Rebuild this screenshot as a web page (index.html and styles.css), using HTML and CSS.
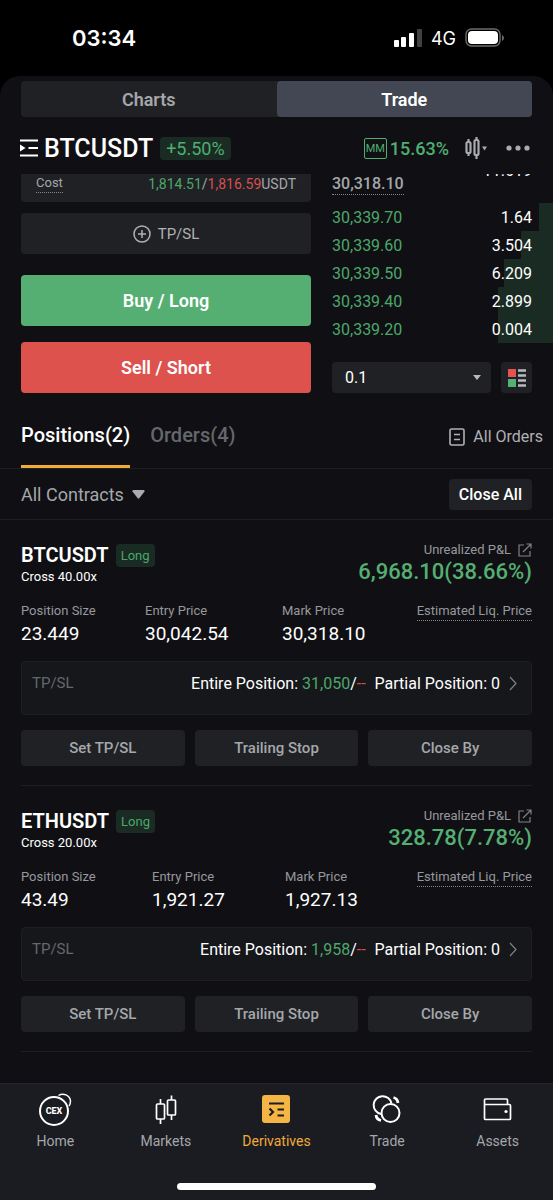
FILE: index.html
```html
<!DOCTYPE html>
<html lang="en">
<head>
    <meta charset="UTF-8">
    <meta name="viewport" content="width=device-width, initial-scale=1.0">
    <title>BTCUSDT - Derivatives</title>
    <link rel="stylesheet" href="styles.css">
</head>
<body>
    <div class="status-bar">
        <span class="time">03:34</span>
        <div class="status-icons">
            <svg width="28" height="18" viewBox="0 0 28 18">
                <rect x="0" y="11" width="5" height="7" rx="1" fill="#fff"/>
                <rect x="7" y="8" width="5" height="10" rx="1" fill="#fff"/>
                <rect x="15" y="4" width="5" height="14" rx="1" fill="#fff"/>
                <rect x="23" y="0" width="5" height="18" rx="1" fill="#414141"/>
            </svg>
            <span class="network">4G</span>
            <svg width="40" height="20" viewBox="0 0 40 20">
                <rect x="1" y="1" width="34" height="17" rx="5.5" fill="none" stroke="#6d6d66" stroke-width="1.4"/>
                <rect x="3" y="3" width="30" height="13" rx="4" fill="#fff"/>
                <path d="M37 7v6q2-1 2-3t-2-3z" fill="#6d6d66"/>
            </svg>
        </div>
    </div>

    <div class="app">
        <div class="switch">
            <button>Charts</button>
            <button class="active">Trade</button>
        </div>

        <header class="symbol-bar">
            <svg width="18" height="18" viewBox="0 0 18 18">
                <path d="M0 1.5h18M8.5 9H18M0 16.5h18" stroke="#fff" stroke-width="2.2"/>
                <path d="M0 5.5L5.5 9 0 12.5z" fill="#fff"/>
            </svg>
            <h1>BTCUSDT</h1>
            <span class="change">+5.50%</span>
            <span class="mm">MM</span>
            <span class="mm-rate">15.63%</span>
            <svg class="candles" width="22" height="22" viewBox="0 0 22 22" fill="none" stroke="#a9abb0" stroke-width="2.2">
                <path d="M3.5 2v3M3.500 16v3M11.5 0v3M11.5 18v4"/>
                <rect x="1.500" y="5" width="4" height="11" rx="1.5"/>
                <rect x="9.500" y="3" width="4" height="15" rx="1.5"/>
                <path d="M17 9.500h5l-2.500 4z" fill="#a9abb0" stroke="none"/>
            </svg>
            <svg width="24" height="6" viewBox="0 0 24 6" fill="#a9abb0">
                <circle cx="3" cy="3" r="2.6"/>
                <circle cx="12" cy="3" r="2.6"/>
                <circle cx="21" cy="3" r="2.6"/>
            </svg>
        </header>

        <section class="order-area">
            <div class="order-form">
                <div class="cost">
                    <span class="dotted">Cost</span>
                    <span class="cost-value"><span class="green">1,814.51</span>/<span class="red">1,816.59</span>USDT</span>
                </div>
                <button class="tpsl-btn">
                    <svg width="18" height="18" viewBox="0 0 18 18" fill="none" stroke="#b0b1b4" stroke-width="1.5">
                        <circle cx="9" cy="9" r="8"/>
                        <path d="M9 5v8M5 9h8"/>
                    </svg>
                    TP/SL
                </button>
                <button class="side-btn buy">Buy / Long</button>
                <button class="side-btn sell">Sell / Short</button>
            </div>

            <div class="order-book">
                <div class="book-head">
                    <span class="dotted mark">30,318.10</span>
                    <span class="last-ask">11.619</span>
                </div>
                <div class="book-row depth-1"><span>30,339.70</span><span>1.64</span></div>
                <div class="book-row depth-2"><span>30,339.60</span><span>3.504</span></div>
                <div class="book-row depth-3"><span>30,339.50</span><span>6.209</span></div>
                <div class="book-row depth-4"><span>30,339.40</span><span>2.899</span></div>
                <div class="book-row depth-4"><span>30,339.20</span><span>0.004</span></div>
                <div class="book-tools">
                    <div class="step">
                        <select aria-label="Price step">
                            <option>0.1</option>
                            <option>1</option>
                            <option>10</option>
                        </select>
                        <svg width="8" height="5" viewBox="0 0 8 5"><path d="M0 0h8L4 5z" fill="#b9babd"/></svg>
                    </div>
                    <button class="view-btn" aria-label="Order book view">
                        <svg width="18" height="18" viewBox="0 0 18 18">
                            <path d="M0 0h8v8H0z" fill="#e5534f"/>
                            <path d="M0 10h8v8H0z" fill="#54b073"/>
                            <path d="M10 1.5h8M10 6.5h8M10 11.5h8M10 16.5h8" stroke="#b9babd" stroke-width="2.5"/>
                        </svg>
                    </button>
                </div>
            </div>
        </section>

        <nav class="tabs">
            <button class="active">Positions(2)</button>
            <button>Orders(4)</button>
            <a href="#" class="all-orders">
                <svg width="16" height="18" viewBox="0 0 16 18" fill="none" stroke="#b0b1b4" stroke-width="1.6">
                    <rect x="1" y="1" width="14" height="16" rx="1.5"/>
                    <path d="M5 6.5h6M5 11.5h6"/>
                </svg>
                All Orders
            </a>
        </nav>

        <div class="filter">
            <button class="contracts">
                All Contracts
                <svg width="13" height="9" viewBox="0 0 13 9"><path d="M1.5 0h10q1.5 0 1 1.500L7.500 8q-1 1-2 0L.5 1.500Q0 0 1.500 0z" fill="#a9abb0"/></svg>
            </button>
            <button class="close-all">Close All</button>
        </div>

        <main>
            <article class="position">
                <div class="pos-head">
                    <div>
                        <h2>BTCUSDT <span class="long">Long</span></h2>
                        <p class="leverage">Cross 40.00x</p>
                    </div>
                    <div class="pnl">
                        <a href="#">Unrealized P&amp;L
                            <svg width="14" height="14" viewBox="0 0 14 14" fill="none" stroke="#808186" stroke-width="1.2">
                                <path d="M6 2H1v11h11V8M5 9l8-8M8.500 1H13v4.500"/>
                            </svg>
                        </a>
                        <strong>6,968.10(38.66%)</strong>
                    </div>
                </div>
                <dl class="stats">
                    <div><dt>Position Size</dt><dd>23.449</dd></div>
                    <div><dt>Entry Price</dt><dd>30,042.54</dd></div>
                    <div><dt>Mark Price</dt><dd>30,318.10</dd></div>
                    <div><dt class="dotted">Estimated Liq. Price</dt></div>
                </dl>
                <a href="#" class="tpsl-box">
                    <span class="label">TP/SL</span>
                    <span>Entire Position: <span class="green">31,050</span>/<span class="red">--</span></span>
                    <span>Partial Position: 0</span>
                    <svg width="8" height="15" viewBox="0 0 8 15" fill="none" stroke="#808186" stroke-width="1.2"><path d="M1 1l6 6.500L1 14"/></svg>
                </a>
                <div class="actions">
                    <button>Set TP/SL</button>
                    <button>Trailing Stop</button>
                    <button>Close By</button>
                </div>
            </article>

            <article class="position">
                <div class="pos-head">
                    <div>
                        <h2>ETHUSDT <span class="long">Long</span></h2>
                        <p class="leverage">Cross 20.00x</p>
                    </div>
                    <div class="pnl">
                        <a href="#">Unrealized P&amp;L
                            <svg width="14" height="14" viewBox="0 0 14 14" fill="none" stroke="#808186" stroke-width="1.2">
                                <path d="M6 2H1v11h11V8M5 9l8-8M8.500 1H13v4.500"/>
                            </svg>
                        </a>
                        <strong>328.78(7.78%)</strong>
                    </div>
                </div>
                <dl class="stats narrow">
                    <div><dt>Position Size</dt><dd>43.49</dd></div>
                    <div><dt>Entry Price</dt><dd>1,921.27</dd></div>
                    <div><dt>Mark Price</dt><dd>1,927.13</dd></div>
                    <div><dt class="dotted">Estimated Liq. Price</dt></div>
                </dl>
                <a href="#" class="tpsl-box">
                    <span class="label">TP/SL</span>
                    <span>Entire Position: <span class="green">1,958</span>/<span class="red">--</span></span>
                    <span>Partial Position: 0</span>
                    <svg width="8" height="15" viewBox="0 0 8 15" fill="none" stroke="#808186" stroke-width="1.2"><path d="M1 1l6 6.500L1 14"/></svg>
                </a>
                <div class="actions">
                    <button>Set TP/SL</button>
                    <button>Trailing Stop</button>
                    <button>Close By</button>
                </div>
            </article>
        </main>
    </div>

    <footer class="bottom-nav">
        <nav>
            <a href="#">
                <svg width="34" height="34" viewBox="0 0 34 34" fill="none" stroke="#fff" stroke-width="2">
                    <circle cx="16" cy="19" r="14"/>
                    <path d="M20.5 3.500C25 .5 32 3 32.500 9q0 3-1.500 5" stroke-width="1.5"/>
                    <text x="16" y="22" class="cex">CEX</text>
                </svg>
                Home
            </a>
            <a href="#">
                <svg width="34" height="34" viewBox="0 0 34 34" fill="none" stroke="#fff" stroke-width="1.7">
                    <rect x="7.500" y="12" width="8" height="15" rx="1"/>
                    <rect x="18.500" y="8" width="8" height="15" rx="1"/>
                    <path d="M11.500 7v5M11.500 27v5M22.500 3.500V8M22.500 23v5"/>
                </svg>
                Markets
            </a>
            <a href="#" class="active">
                <svg width="34" height="34" viewBox="0 0 34 34" fill="none" stroke="#1b1c21" stroke-width="2.2">
                    <rect x="3" y="3" width="28" height="28" rx="3" fill="#f5b544" stroke="none"/>
                    <path d="M10 11.500h15M18.500 17.500H25M18.500 23.500H25M10.500 16.500l3.500 3.500-3.500 3.500"/>
                </svg>
                Derivatives
            </a>
            <a href="#">
                <svg width="34" height="34" viewBox="0 0 34 34" fill="none" stroke="#fff" stroke-width="2">
                    <circle cx="20.500" cy="21" r="9"/>
                    <path d="M11 22A9 9 0 1 1 21.500 11.500"/>
                    <path d="M23.500 5.500q4 1 4.500 5.500M6 23q.5 4.500 5 5.500" stroke-width="2.8"/>
                </svg>
                Trade
            </a>
            <a href="#">
                <svg width="34" height="34" viewBox="0 0 34 34" fill="none" stroke="#fff" stroke-width="1.700">
                    <path d="M26.500 12.500V8q0-1-1-1h-21q-1 0-1 1v18.500q0 1 1 1h24q1 0 1-1V13.500q0-1-1-1h-25"/>
                    <circle cx="25" cy="19.500" r="1.600" fill="#fff" stroke="none"/>
                </svg>
                Assets
            </a>
        </nav>
        <div class="home-indicator"></div>
    </footer>
</body>
</html>
```
FILE: styles.css
```css
* {
    box-sizing: border-box;
}

body {
    margin: 0;
    min-height: 100vh;
    display: flex;
    flex-direction: column;
    background: #000;
    color: #fff;
    font-family: Roboto, "Liberation Sans", sans-serif;
    font-size: 16px;
}

h1, h2, p, dl, dd {
    margin: 0;
}

svg {
    flex: none;
}

a {
    color: inherit;
    text-decoration: none;
}

button {
    border: none;
    padding: 0;
    background: none;
    color: inherit;
    font: inherit;
    cursor: pointer;
}

.green {
    color: #4ba86a;
}

.red {
    color: #d94f4d;
}

.dotted {
    border-bottom: 1px dotted #85868b;
}

/* status bar */
.status-bar {
    height: 76px;
    padding: 0 48px 0 72px;
    display: flex;
    justify-content: space-between;
    align-items: center;
}

.time {
    font: 600 22px Inter, sans-serif;
}

.status-icons {
    display: flex;
    align-items: center;
    gap: 9px;
}

.network {
    font: 400 18px Inter, sans-serif;
}

/* app */
.app {
    flex: 1;
    padding-top: 5px;
    background: #101014;
    border-radius: 20px 20px 0 0;
}

.switch {
    height: 36px;
    margin: 0 21px;
    display: flex;
    background: #202125;
    border-radius: 4px;
}

.switch button {
    flex: 1;
    color: #a5a7ab;
    border-radius: 4px;
    font-size: 18px;
    font-weight: 600;
}

.switch button.active {
    background: #424753;
    color: #fff;
}

.symbol-bar {
    height: 57px;
    padding: 5px 23px 0 20px;
    display: flex;
    align-items: center;
}

.symbol-bar h1 {
    margin: 0 7px 0 6px;
    font-size: 25px;
    font-weight: 500;
}

.change {
    padding: 0 6px;
    background: #192b23;
    color: #4fae70;
    border-radius: 4px;
    font-size: 18px;
    line-height: 23px;
}

.mm {
    margin: 0 3px 0 auto;
    width: 23px;
    border: 1px solid #4fae70;
    border-radius: 2px;
    color: #4fae70;
    font-size: 11px;
    line-height: 19px;
    text-align: center;
}

.mm-rate {
    color: #4fae70;
    font-size: 18px;
    font-weight: 500;
}

.candles {
    margin: 0 19px 0 16px;
}

/* order form and order book */
.order-area {
    height: 219px;
    display: grid;
    grid-template-columns: 290px 1fr;
    gap: 21px;
    padding-left: 21px;
    overflow: hidden;
}

.cost {
    height: 28px;
    padding: 0 15px;
    display: flex;
    justify-content: space-between;
    align-items: flex-start;
    background: #202125;
    border-radius: 0 0 4px 4px;
    color: #a5a7ab;
    font-size: 13px;
    line-height: 18px;
}

.cost-value {
    font-size: 14px;
    line-height: 20px;
}

.tpsl-btn {
    width: 100%;
    height: 41px;
    margin: 11px 0 21px;
    display: flex;
    align-items: center;
    justify-content: center;
    gap: 7px;
    background: #202125;
    border-radius: 4px;
    color: #b0b1b4;
    font-size: 15px;
}

.side-btn {
    display: block;
    width: 100%;
    height: 51px;
    border-radius: 4px;
    font-size: 18px;
    font-weight: 600;
}

.buy {
    margin-bottom: 16px;
    background: #55af72;
}

.sell {
    background: #de524e;
}

.book-head {
    height: 29px;
    padding-right: 21px;
    display: flex;
    justify-content: space-between;
    align-items: flex-start;
}

.mark {
    color: #a5a7ab;
    font-weight: 500;
    line-height: 20px;
}

/* the last ask row is scrolled under the header */
.last-ask {
    margin-top: -12px;
    line-height: 18px;
}

.book-row {
    height: 28px;
    padding-right: 21px;
    display: flex;
    justify-content: space-between;
    align-items: center;
    background: linear-gradient(#192b23, #192b23) right / 0 100% no-repeat;
}

.book-row span:first-child {
    color: #4ba86a;
}

.depth-1 { background-size: 14px 100%; }
.depth-2 { background-size: 32px 100%; }
.depth-3 { background-size: 49px 100%; }
.depth-4 { background-size: 55px 100%; }

.book-tools {
    margin-top: 19px;
    padding-right: 21px;
    display: flex;
    gap: 10px;
}

.step {
    flex: 1;
    padding-right: 10px;
    display: flex;
    align-items: center;
    background: #202125;
    border-radius: 4px;
}

.step select {
    flex: 1;
    padding: 0 0 0 13px;
    appearance: none;
    border: none;
    background: none;
    color: #fff;
    font: inherit;
}

.view-btn {
    width: 31px;
    height: 31px;
    display: grid;
    place-items: center;
    background: #202125;
    border-radius: 4px;
}

/* tabs */
.tabs {
    height: 76px;
    padding: 12px 10px 0 21px;
    display: flex;
    border-bottom: 1px solid #1e1f23;
}

.tabs button {
    margin-right: 20px;
    border-bottom: 3px solid transparent;
    color: #65676c;
    font-size: 20px;
    font-weight: 500;
}

.tabs button.active {
    border-color: #f0aa3c;
    color: #fff;
}

.all-orders {
    margin-left: auto;
    display: flex;
    align-items: center;
    gap: 8px;
    color: #b0b1b4;
}

.filter {
    height: 51px;
    padding: 0 21px;
    display: flex;
    justify-content: space-between;
    align-items: center;
    border-bottom: 1px solid #1e1f23;
}

.contracts {
    display: flex;
    align-items: center;
    gap: 8px;
    color: #a5a7ab;
    font-size: 18px;
}

.close-all {
    padding: 0 10px;
    background: #202125;
    border-radius: 4px;
    font-weight: 500;
    line-height: 31px;
}

/* positions */
.position {
    margin: 0 21px;
    padding: 20px 0 19px;
    border-bottom: 1px solid #1e1f23;
}

.pos-head {
    display: flex;
    justify-content: space-between;
}

.pos-head h2 {
    display: flex;
    align-items: center;
    gap: 7px;
    font-size: 20px;
    font-weight: 600;
    line-height: 30px;
}

.long {
    padding: 0 5px;
    background: #192b23;
    border-radius: 4px;
    color: #4ba86a;
    font-size: 13px;
    font-weight: 400;
    line-height: 23px;
}

.leverage {
    font-size: 13px;
    line-height: 14px;
}

.pnl {
    display: flex;
    flex-direction: column;
    align-items: flex-end;
}

.pnl a {
    display: flex;
    align-items: center;
    gap: 7px;
    color: #97989c;
    font-size: 13px;
    line-height: 20px;
}

.pnl strong {
    color: #55af72;
    font-size: 22px;
    font-weight: 500;
    line-height: 24px;
}

.stats {
    margin: 18px 0 17px;
    height: 42px;
    display: grid;
    grid-template-columns: 124px 137px 1fr auto;
}

.stats.narrow {
    grid-template-columns: 131px 133px 1fr auto;
}

.stats dt {
    color: #97989c;
    font-size: 13px;
    line-height: 18px;
}

.stats dd {
    font-size: 19px;
    line-height: 28px;
}

.tpsl-box {
    height: 54px;
    padding: 0 14px 10px 10px;
    display: flex;
    align-items: center;
    gap: 9px;
    background: #16171b;
    border: 1px solid #1e1f23;
    border-radius: 4px;
}

.tpsl-box .label {
    margin-right: auto;
    color: #65676c;
    font-size: 15px;
}

.actions {
    margin-top: 15px;
    display: grid;
    grid-template-columns: repeat(3, 1fr);
    gap: 10px;
}

.actions button {
    height: 36px;
    background: #202125;
    border-radius: 4px;
    color: #a5a7ab;
    font-size: 15px;
    font-weight: 500;
}

/* bottom navigation */
.bottom-nav {
    height: 117px;
    background: #1b1c21;
    border-top: 1px solid #242529;
}

.bottom-nav nav {
    height: 99px;
    padding-top: 8px;
    display: grid;
    grid-template-columns: repeat(5, 1fr);
}

.bottom-nav a {
    display: flex;
    flex-direction: column;
    align-items: center;
    gap: 5px;
    color: #a5a7ab;
    font-size: 14px;
    line-height: 20px;
}

.bottom-nav a.active {
    color: #f0aa3c;
}

.cex {
    fill: #fff;
    stroke: none;
    font-size: 9px;
    font-weight: 800;
    text-anchor: middle;
}

.home-indicator {
    width: 36%;
    height: 7px;
    margin: 0 auto;
    background: #fff;
    border-radius: 4px;
}
```
